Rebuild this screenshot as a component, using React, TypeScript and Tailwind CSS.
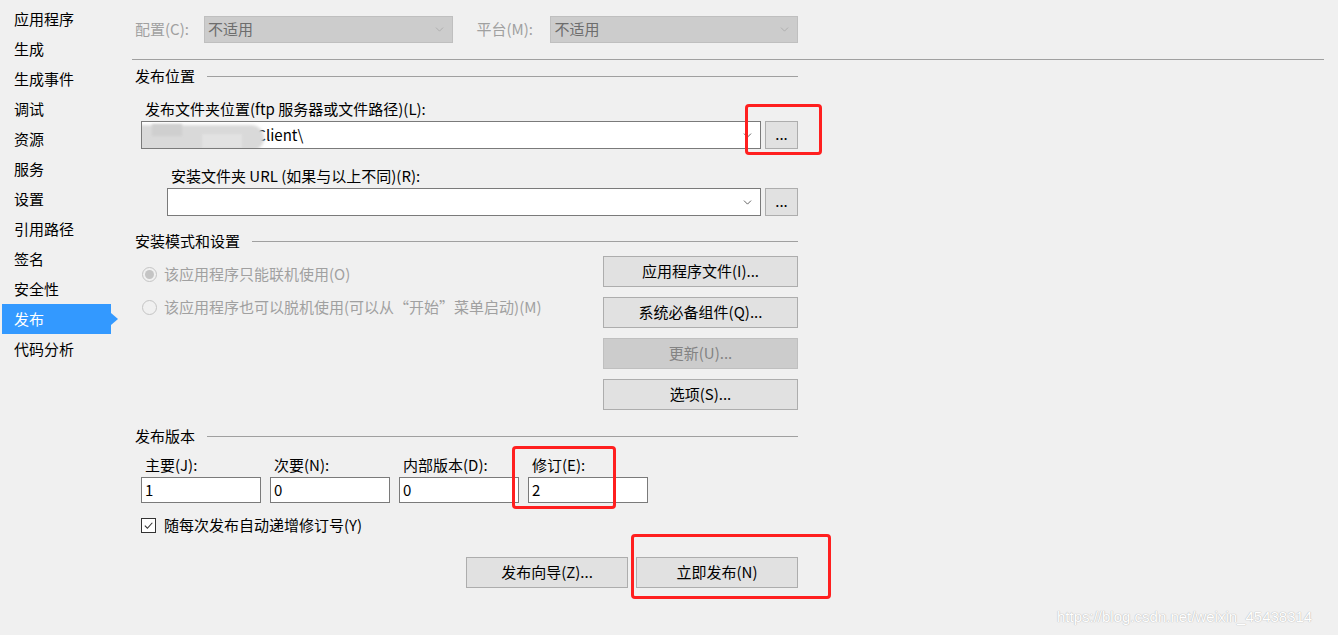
import { ChevronDown } from 'lucide-react'

const navItems = [
  '应用程序',
  '生成',
  '生成事件',
  '调试',
  '资源',
  '服务',
  '设置',
  '引用路径',
  '签名',
  '安全性',
  '发布',
  '代码分析'
]

function SectionHeader({ title }: { title: string }) {
  return (
    <div className="flex items-center h-[20px] pl-[3px]">
      <span className="text-[#000] whitespace-nowrap">{title}</span>
      <div className="flex-1 h-px bg-[#a0a0a0] ml-[12px]" />
    </div>
  )
}

function DisabledSelect({ width }: { width: string }) {
  return (
    <div
      className={`${width} h-[27px] bg-[#cccccc] border border-[#bfbfbf] flex items-center justify-between pl-[3px] pr-[6px] text-[#6d6d6d]`}
    >
      <span>不适用</span>
      <ChevronDown className="w-[13px] h-[13px] text-[#a8a8a8]" strokeWidth={1.5} />
    </div>
  )
}

function BrowseButton() {
  return (
    <div className="w-[33px] h-[28px] bg-[#e1e1e1] border border-[#adadad] flex items-center justify-center text-[#000] leading-none pb-[4px]">
      ...
    </div>
  )
}

function ActionButton({ label, disabled, width = 'w-[195px]' }: { label: string; disabled?: boolean; width?: string }) {
  return (
    <div
      className={`${width} h-[31px] border flex items-center justify-center ${
        disabled
          ? 'bg-[#cccccc] border-[#bfbfbf] text-[#838383]'
          : 'bg-[#e1e1e1] border-[#adadad] text-[#000]'
      }`}
    >
      {label}
    </div>
  )
}

function VersionField({ label, value }: { label: string; value: string }) {
  return (
    <div className="flex flex-col w-[120px]">
      <div className="h-[20px] flex items-center pl-[4px]">{label}</div>
      <div className="mt-[2px] h-[26px] bg-white border border-[#7a7a7a] flex items-center pl-[3px]">
        {value}
      </div>
    </div>
  )
}

function RedBox({ className }: { className: string }) {
  return (
    <div
      className={`absolute border-[3px] border-[#ff1f1f] rounded-[4px] pointer-events-none ${className}`}
    />
  )
}

export default function App() {
  return (
    <div
      className="relative w-[1338px] h-[635px] bg-[#f0f0f0] flex text-[15px] text-[#000] overflow-hidden"
      style={{ fontFamily: '"Noto Sans CJK SC", "Noto Sans", sans-serif' }}
    >
      {/* Sidebar */}
      <div className="w-[132px] pt-[4px] flex flex-col shrink-0">
        {navItems.map((item) => {
          const active = item === '发布'
          return (
            <div
              key={item}
              className={`relative ml-[2px] w-[109px] h-[30px] flex items-center pl-[12px] ${
                active ? 'bg-[#3399ff] text-white' : 'text-[#000]'
              }`}
            >
              {item}
              {active && (
                <div className="absolute right-[-7px] top-[9px] w-0 h-0 border-y-[6px] border-y-transparent border-l-[7px] border-l-[#3399ff]" />
              )}
            </div>
          )
        })}
      </div>

      {/* Main */}
      <div className="flex-1 flex flex-col">
        {/* config row */}
        <div className="flex items-center pt-[16px] pl-[3px] w-[666px]">
          <span className="text-[#a0a0a0] w-[69px]">配置(C):</span>
          <DisabledSelect width="w-[249px]" />
          <span className="text-[#a0a0a0] ml-[24px] w-[74px]">平台(M):</span>
          <DisabledSelect width="w-[248px]" />
        </div>
        <div className="mt-[16px] h-px bg-[#a0a0a0] mr-[14px]" />

        <div className="w-[666px] flex flex-col">
          {/* 发布位置 */}
          <div className="mt-[6px]">
            <SectionHeader title="发布位置" />
          </div>
          <div className="mt-[13px] h-[20px] flex items-center pl-[13px]">
            发布文件夹位置(ftp 服务器或文件路径)(L):
          </div>
          <div className="mt-[2px] flex items-center pl-[9px]">
            <div className="relative w-[620px] h-[28px] bg-white border border-[#7a7a7a] flex items-center justify-between pr-[6px] overflow-hidden">
              <span className="pl-[90px]">\ \ \Client\</span>
              <div className="absolute left-[-2px] top-[3px] w-[124px] h-[26px] rounded-r-full bg-[#d9d9d9] blur-[1.5px]" />
              <div className="absolute left-[10px] top-[2px] w-[30px] h-[12px] bg-[#cfcfcf] blur-[1px]" />
              <div className="absolute left-[60px] top-[12px] w-[40px] h-[14px] bg-[#e2e2e2] blur-[1px]" />
              <ChevronDown className="w-[13px] h-[13px] text-[#404040]" strokeWidth={1.5} />
            </div>
            <div className="ml-[4px]">
              <BrowseButton />
            </div>
          </div>

          <div className="mt-[17px] h-[20px] flex items-center pl-[39px]">
            安装文件夹 URL (如果与以上不同)(R):
          </div>
          <div className="mt-[2px] flex items-center pl-[35px]">
            <div className="w-[594px] h-[28px] bg-white border border-[#7a7a7a] flex items-center justify-end pr-[6px]">
              <ChevronDown className="w-[13px] h-[13px] text-[#404040]" strokeWidth={1.5} />
            </div>
            <div className="ml-[4px]">
              <BrowseButton />
            </div>
          </div>

          {/* 安装模式和设置 */}
          <div className="mt-[15px]">
            <SectionHeader title="安装模式和设置" />
          </div>
          <div className="mt-[5px] flex justify-between">
            <div className="flex flex-col pl-[10px] pt-[8px] text-[#a0a0a0]">
              <div className="h-[20px] flex items-center">
                <div className="w-[15px] h-[15px] rounded-full border border-[#c4c4c4] bg-[#f0f0f0] flex items-center justify-center">
                  <div className="w-[9px] h-[9px] rounded-full bg-[#c4c4c4]" />
                </div>
                <span className="ml-[7px]">该应用程序只能联机使用(O)</span>
              </div>
              <div className="mt-[13px] h-[20px] flex items-center">
                <div className="w-[15px] h-[15px] rounded-full border border-[#c4c4c4] bg-[#f0f0f0]" />
                <span className="ml-[7px]">该应用程序也可以脱机使用(可以从“开始”菜单启动)(M)</span>
              </div>
            </div>
            <div className="flex flex-col gap-[10px]">
              <ActionButton label="应用程序文件(I)..." />
              <ActionButton label="系统必备组件(Q)..." />
              <ActionButton label="更新(U)..." disabled />
              <ActionButton label="选项(S)..." />
            </div>
          </div>

          {/* 发布版本 */}
          <div className="mt-[16px]">
            <SectionHeader title="发布版本" />
          </div>
          <div className="mt-[9px] flex gap-[9px] pl-[9px]">
            <VersionField label="主要(J):" value="1" />
            <VersionField label="次要(N):" value="0" />
            <VersionField label="内部版本(D):" value="0" />
            <VersionField label="修订(E):" value="2" />
          </div>
          <div className="mt-[12px] h-[20px] flex items-center pl-[9px]">
            <div className="w-[15px] h-[15px] border border-[#333] bg-white flex items-center justify-center">
              <svg viewBox="0 0 12 12" className="w-[11px] h-[11px]">
                <path d="M2 6.2 L4.8 9 L10.2 3" fill="none" stroke="#333" strokeWidth="1.2" />
              </svg>
            </div>
            <span className="ml-[8px]">随每次发布自动递增修订号(Y)</span>
          </div>
          <div className="mt-[22px] flex justify-end gap-[8px]">
            <ActionButton label="发布向导(Z)..." width="w-[162px]" />
            <ActionButton label="立即发布(N)" width="w-[162px]" />
          </div>
        </div>
      </div>

      {/* annotations */}
      <RedBox className="left-[745px] top-[104px] w-[77px] h-[51px]" />
      <RedBox className="left-[512px] top-[446px] w-[104px] h-[63px]" />
      <RedBox className="left-[631px] top-[534px] w-[200px] h-[65px]" />

      <div
        className="absolute left-[1057px] top-[606px] text-[15px] text-white"
        style={{ fontFamily: '"Liberation Sans", Arial, sans-serif', textShadow: '0 0 1px #b8b8b8, 0 0 1px #b8b8b8' }}
      >
        https://blog.csdn.net/weixin_45438314
      </div>
    </div>
  )
}
